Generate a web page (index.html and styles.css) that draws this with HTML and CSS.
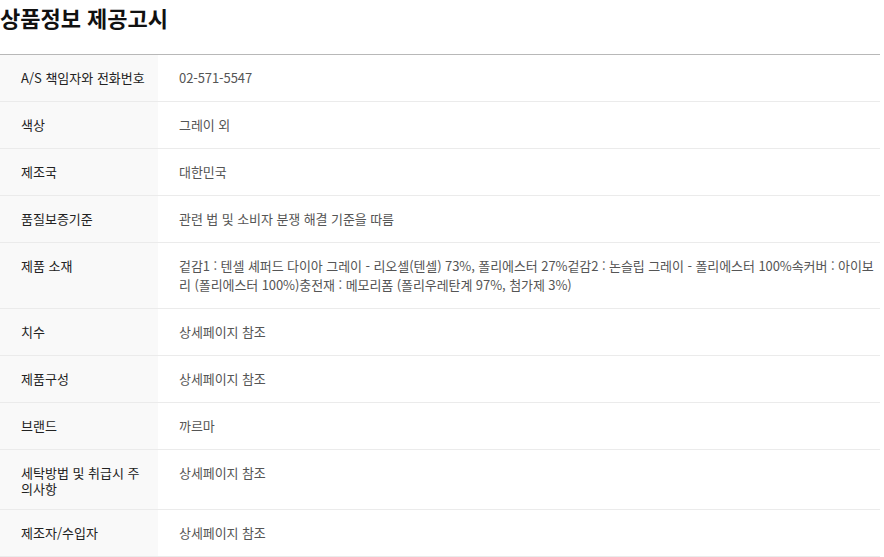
FILE: index.html
```html
<!DOCTYPE html>
<html lang="ko">
<head>
<meta charset="utf-8">
<title>상품정보 제공고시</title>
<link rel="stylesheet" href="styles.css">
</head>
<body>
<section class="notice">
  <h2 class="notice-title">상품정보 제공고시</h2>
  <div class="info-table">
    <div class="info-row"><div class="info-label">A/S 책임자와 전화번호</div><div class="info-value">02-571-5547</div></div>
    <div class="info-row"><div class="info-label">색상</div><div class="info-value">그레이 외</div></div>
    <div class="info-row"><div class="info-label">제조국</div><div class="info-value">대한민국</div></div>
    <div class="info-row"><div class="info-label">품질보증기준</div><div class="info-value">관련 법 및 소비자 분쟁 해결 기준을 따름</div></div>
    <div class="info-row"><div class="info-label">제품 소재</div><div class="info-value">겉감1 : 텐셀 셰퍼드 다이아 그레이 - 리오셀(텐셀) 73%, 폴리에스터 27%겉감2 : 논슬립 그레이 - 폴리에스터 100%속커버 : 아이보리 (폴리에스터 100%)충전재 : 메모리폼 (폴리우레탄계 97%, 첨가제 3%)</div></div>
    <div class="info-row"><div class="info-label">치수</div><div class="info-value">상세페이지 참조</div></div>
    <div class="info-row"><div class="info-label">제품구성</div><div class="info-value">상세페이지 참조</div></div>
    <div class="info-row"><div class="info-label">브랜드</div><div class="info-value">까르마</div></div>
    <div class="info-row"><div class="info-label">세탁방법 및 취급시 주의사항</div><div class="info-value">상세페이지 참조</div></div>
    <div class="info-row"><div class="info-label">제조자/수입자</div><div class="info-value">상세페이지 참조</div></div>
  </div>
</section>
</body>
</html>
```

FILE: styles.css
```css
html, body {
  margin: 0;
  padding: 0;
  background: #fff;
}
body {
  font-family: "Noto Sans CJK KR", "Noto Sans", sans-serif;
}
.notice {
  width: 880px;
}
.notice-title {
  margin: 0;
  padding: 1px 0 0 0;
  height: 54px;
  box-sizing: border-box;
  font-size: 22px;
  line-height: 32px;
  font-weight: 700;
  color: #111;
  letter-spacing: 0;
}
.info-table {
  border-top: 1px solid #b8b8b8;
}
.info-row {
  display: grid;
  grid-template-columns: 158px 1fr;
  border-bottom: 1px solid #ebebeb;
}
.info-label {
  background: #f9f9f9;
  padding: 15px 10px 12px 21px;
  font-size: 13px;
  line-height: 16px;
  color: #222;
  letter-spacing: 0;
}
.info-value {
  padding: 13px 0 14px 21px;
  font-size: 13px;
  line-height: 19px;
  color: #555;
  letter-spacing: -0.08px;
}
```
